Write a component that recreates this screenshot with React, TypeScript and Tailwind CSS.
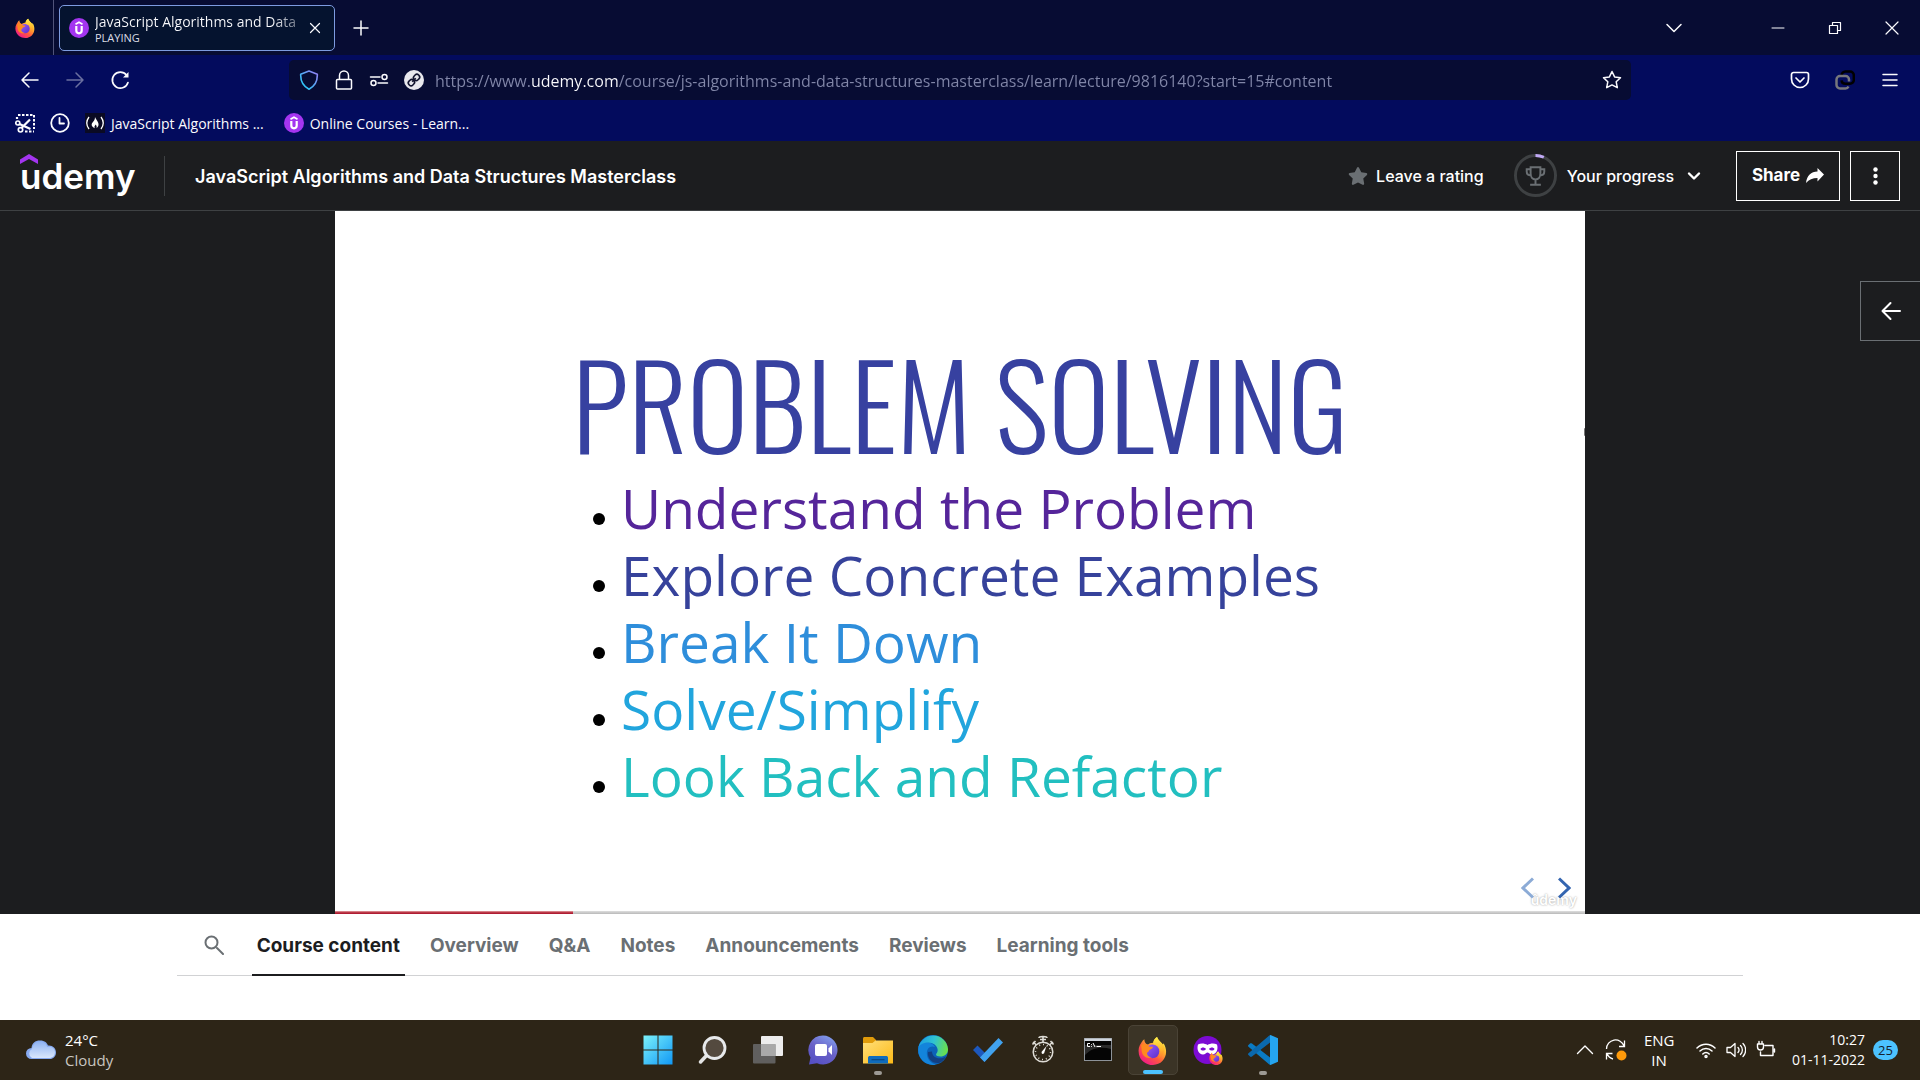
import React from "react";
import { FaStar } from "react-icons/fa";

const seg = "font-['Segoe_UI','Open_Sans','Noto_Sans',sans-serif]";

function FirefoxLogo({ className = "size-5", id }: { className?: string; id: string }) {
  return (
    <svg viewBox="0 0 32 32" className={className} aria-hidden="true">
      <defs>
        <linearGradient id={`${id}-a`} x1="0.85" y1="0.1" x2="0.2" y2="0.95">
          <stop offset="0" stopColor="#fff44f" />
          <stop offset="0.3" stopColor="#ffb02e" />
          <stop offset="0.6" stopColor="#ff5a3c" />
          <stop offset="1" stopColor="#f0188c" />
        </linearGradient>
        <linearGradient id={`${id}-b`} x1="0" y1="0" x2="1" y2="1">
          <stop offset="0" stopColor="#9a5cff" />
          <stop offset="1" stopColor="#5b2fc9" />
        </linearGradient>
        <linearGradient id={`${id}-c`} x1="0" y1="0" x2="0" y2="1">
          <stop offset="0" stopColor="#fff04a" />
          <stop offset="0.6" stopColor="#ffb62b" />
          <stop offset="1" stopColor="#ff7a30" />
        </linearGradient>
      </defs>
      <path fill={`url(#${id}-a)`} d="M4 7c-3 4-4 8-3 13 1.400 7 8 12 15.500 12C25 32 31 25.500 31 17.500c0-3.500-1-7-3-9.500l-.6 2.200C26 7 22 5 21 1c-2.500 1.500-4 4-4.200 6.500C14 7.500 12 8.500 11 9.500 8.500 9 7 6.500 7 3.500 5.500 4.500 4.500 6 4 7z" />
      <circle cx="16" cy="17" r="7.500" fill={`url(#${id}-b)`} />
      <path fill="#ff8a1f" d="M3.500 10c3-2 6.500-1 8.500 1.500 1.500.3 3 .2 4.500.3-.2 1.700-1.500 2.300-3 3-2 1-1.500 3.200-3.500 3.500-.5 3 2.500 5.500 5.500 5.200-5 2.500-11.500-1-11.500-8z" />
      <path fill={`url(#${id}-c)`} d="M21 1c-3.500 2-4.800 6-3.600 8.500 5 .8 7.800 4 7.600 8.500-.1 3-1.500 5-3 6.500 4-1 7.500-5.500 7.200-11.500-.4-5-6.400-7-8.200-12z" />
    </svg>
  );
}

function UdemyBadge() {
  return (
    <svg viewBox="0 0 20 20" className="size-5 shrink-0" aria-hidden="true">
      <circle cx="10" cy="10" r="10" fill="#a435f0" />
      <path d="M6.500 6.200 10 4.200l3.500 2" fill="none" stroke="#fff" strokeWidth="1.700" />
      <path d="M7.300 8v4.600a2.700 2.700 0 0 0 5.400 0V8" fill="none" stroke="#fff" strokeWidth="2.200" />
    </svg>
  );
}

function Line({ d, className = "size-5", w = 1.5, box = 20, children }: { d: string; className?: string; w?: number; box?: number; children?: React.ReactNode }) {
  return (
    <svg viewBox={`0 0 ${box} ${box}`} className={`shrink-0 ${className}`} fill="none" stroke="currentColor" strokeWidth={w} strokeLinecap="round" strokeLinejoin="round" aria-hidden="true">
      <path d={d} />
      {children}
    </svg>
  );
}

function IconButton({ label, className = "", children }: { label: string; className?: string; children: React.ReactNode }) {
  return (
    <button type="button" aria-label={label} className={`flex shrink-0 items-center justify-center ${className}`}>
      {children}
    </button>
  );
}

function TabStrip() {
  return (
    <div className="flex h-[55px] items-center bg-[#070c33] text-[#fbfbfe]">
      <div className="flex h-full w-[54px] items-center border-r border-[#51547a] pl-[15px]">
        <FirefoxLogo id="fx-tab" />
      </div>
      <div className="ml-[5px] flex h-[46px] w-[276px] items-center rounded-[5px] border border-[#7d9be0] bg-[#05132f] pl-[9px]">
        <UdemyBadge />
        <div className="ml-1.5 w-[208px] whitespace-nowrap">
          <div className="bg-linear-to-r from-[#fbfbfe] from-85% to-[#fbfbfe]/30 bg-clip-text text-[14px] leading-5 text-transparent">JavaScript Algorithms and Data</div>
          <div className="text-[11px] leading-3 text-[#dcdde6]">PLAYING</div>
        </div>
        <IconButton label="Close tab" className="ml-0.5 size-5">
          <Line d="M5.500 5.500l9 9M14.500 5.500l-9 9" w={1.2} />
        </IconButton>
      </div>
      <IconButton label="New tab" className="ml-[16px] size-5">
        <Line d="M10 3v14M3 10h14" />
      </IconButton>
      <div className="ml-auto flex items-center">
        <IconButton label="List all tabs" className="mr-[50px] h-10 w-[50px]">
          <Line d="M3 6.500l7 7 7-7" />
        </IconButton>
        <IconButton label="Minimize" className="h-10 w-[57px]">
          <Line d="M4 10h12" w={1} className="size-5" />
        </IconButton>
        <IconButton label="Restore" className="h-10 w-[57px]">
          <Line d="M4.500 7.500h8v8h-8zM7.500 7.500v-3h8v8h-3" w={1.2} />
        </IconButton>
        <IconButton label="Close" className="h-10 w-[57px]">
          <Line d="M4 4l12 12M16 4L4 16" w={1.2} />
        </IconButton>
      </div>
    </div>
  );
}

function NavBar() {
  return (
    <div className="flex h-[50px] items-center bg-[#030b5d] pr-[15px] text-[#fbfbfe]">
      <div className="flex w-[289px] shrink-0 items-center gap-[15px] pl-[15px]">
        <IconButton label="Back" className="size-[30px]">
          <Line d="M18 10H2M9 3l-7 7 7 7" className="size-5" />
        </IconButton>
        <IconButton label="Forward" className="size-[30px] text-[#6b70a0]">
          <Line d="M2 10h16M11 3l7 7-7 7" />
        </IconButton>
        <IconButton label="Reload" className="size-[30px]">
          <Line d="M18 12.500a8 8 0 1 1-1.500-7.500" w={1.7}>
            <path d="M18.500 2v5.500H13z" fill="currentColor" stroke="none" />
          </Line>
        </IconButton>
      </div>
      <div className="flex h-10 min-w-0 grow items-center gap-[15px] rounded-[5px] bg-[#070c33] pr-[9px] pl-2.5">
        <svg viewBox="0 0 20 20" className="size-5 shrink-0" fill="none" aria-hidden="true">
          <linearGradient id="shield" x1="0" y1="1" x2="1" y2="0">
            <stop offset="0.2" stopColor="#2fc4f7" />
            <stop offset="0.9" stopColor="#8d84f5" />
          </linearGradient>
          <path d="M10 1l8.300 3.200c.3 6.300-2 11.800-8.300 15-6.300-3.200-8.600-8.700-8.300-15z" stroke="url(#shield)" strokeWidth="1.600" strokeLinejoin="round" />
        </svg>
        <Line d="M3.500 9.500h13a1 1 0 0 1 1 1V18a1 1 0 0 1-1 1h-13a1 1 0 0 1-1-1v-7.500a1 1 0 0 1 1-1zM5.500 9V5.500a4.500 4.500 0 0 1 9 0V9" />
        <Line d="M1.500 7H11M9 13h9.500">
          <circle cx="15.500" cy="7" r="2.500" />
          <circle cx="4.500" cy="13" r="2.500" />
        </Line>
        <svg viewBox="0 0 20 20" className="size-5 shrink-0" fill="none" aria-hidden="true">
          <circle cx="10" cy="10" r="10" fill="#e8e8ee" />
          <g stroke="#12142f" strokeWidth="1.600" transform="rotate(-45 10 10)">
            <rect x="3.200" y="7.300" width="6.300" height="5.400" rx="2.500" />
            <rect x="10.500" y="7.300" width="6.300" height="5.400" rx="2.500" />
            <path d="M7.500 10h5" />
          </g>
        </svg>
        <input
          aria-label="Address"
          className="-ml-1 h-10 min-w-0 grow bg-[linear-gradient(90deg,#8186a8_95px,#fbfbfe_95px,#fbfbfe_184px,#8186a8_184px)] bg-clip-text pt-0.5 text-[16px] text-transparent outline-none"
          defaultValue="https://www.udemy.com/course/js-algorithms-and-data-structures-masterclass/learn/lecture/9816140?start=15#content"
        />
        <IconButton label="Bookmark this page">
          <Line d="M10 1.500l2.600 5.400 5.900.8-4.300 4.100 1.100 5.900L10 14.900l-5.300 2.800 1.100-5.900L1.500 7.700l5.900-.8z" />
        </IconButton>
      </div>
      <div className="flex w-[274px] shrink-0 items-center justify-end gap-[15px]">
        <IconButton label="Save to Pocket" className="size-[30px]">
          <Line d="M3.500 2.500h13a2 2 0 0 1 2 2V9a8.500 8.500 0 0 1-17 0V4.500a2 2 0 0 1 2-2zM6 8l4 4 4-4" w={1.7} />
        </IconButton>
        <IconButton label="Extension" className="size-[30px]">
          <svg viewBox="0 0 20 20" className="size-5" fill="none" strokeWidth="2.500" aria-hidden="true">
            <path d="M6.500 5.500a4 4 0 0 1 4-4H15a3.800 3.800 0 0 1 3.800 3.800V10A3.800 3.800 0 0 1 15 13.800h-4.500a4 4 0 0 1-4-3.500" stroke="#000" />
            <path d="M14 11.500V9.500a3.500 3.500 0 0 0-3.500-3.500H5a3.500 3.500 0 0 0-3.500 3.500V15A3.500 3.500 0 0 0 5 18.500h5a3.500 3.500 0 0 0 3.500-2" stroke="#77777c" />
          </svg>
        </IconButton>
        <IconButton label="Open menu" className="size-[30px]">
          <Line d="M3 4.500h14M3 10h14M3 15.500h14" />
        </IconButton>
      </div>
    </div>
  );
}

function Bookmarks() {
  return (
    <div className="flex h-[36px] items-center bg-[#030b5d] pl-[15px] text-[14px] text-[#fbfbfe]">
      <IconButton label="Take screenshot">
        <svg viewBox="0 0 20 20" className="size-5" fill="none" stroke="currentColor" strokeWidth="1.700" aria-hidden="true">
          <path d="M3 2h16M19 2v14M10 18.500h9" strokeDasharray="2.500 1.500" strokeWidth="2" />
          <circle cx="2.800" cy="10" r="2" />
          <circle cx="5.500" cy="16.800" r="2.200" />
          <path d="M4.500 11l11 5M6.500 15L15 6.500M2 4v2" strokeWidth="2.200" />
        </svg>
      </IconButton>
      <IconButton label="History" className="ml-[15px]">
        <Line d="M9.500 5v5.500H14" w={1.8}>
          <circle cx="10" cy="10" r="8.800" />
        </Line>
      </IconButton>
      <a href="#freecodecamp" className="ml-[15px] flex items-center gap-1.5">
        <svg viewBox="0 0 20 20" className="size-5" fill="none" stroke="#fff" strokeWidth="1.300" aria-hidden="true">
          <rect width="20" height="20" fill="#0a0a23" stroke="none" />
          <path d="M4 4c-3 4-3 8 0 12M16 4c3 4 3 8 0 12" />
          <path d="M10 4c1 3 4 5 3.500 8-.2 1.300-1 2.300-2 3 .5-1.500 0-2.500-1-3.500-.3 1-.9 1.300-1 2.200-.1.600.1 1 .3 1.500C6 13.500 6 11 8 9c1-1.300 2-2.500 2-5z" fill="#fff" stroke="none" />
        </svg>
        JavaScript Algorithms ...
      </a>
      <a href="#online-courses" className="ml-5 flex items-center gap-1.5">
        <UdemyBadge />
        Online Courses - Learn...
      </a>
    </div>
  );
}

function CourseHeader() {
  return (
    <header className="flex h-[70px] items-center border-b border-[#3e4143] bg-[#1c1d1f] pr-5 pl-5 font-['Inter',sans-serif] text-white">
      <a href="#home" aria-label="udemy" className="relative flex w-[145px] items-center border-r border-[#3e4143]">
        <svg viewBox="0 0 18 10" className="absolute top-0 left-0 h-2.5 w-[18px] -translate-y-0.5" aria-hidden="true">
          <path d="M0 5.500 9 0l9 5.500V10L9 5 0 10z" fill="#a435f0" />
        </svg>
        <span className="text-[35px] leading-10 font-semibold">udemy</span>
      </a>
      <h1 className="ml-[30px] pt-0.5 text-[18px] font-semibold">JavaScript Algorithms and Data Structures Masterclass</h1>
      <div className="ml-auto flex items-center text-[16px] font-medium">
        <button type="button" className="flex items-center gap-2">
          <FaStar className="size-5 text-[#6a6f73]" />
          Leave a rating
        </button>
        <button type="button" className="ml-[30px] flex items-center gap-2.5">
          <svg viewBox="0 0 44 44" className="size-[43px]" fill="none" aria-hidden="true">
            <circle cx="22" cy="22" r="20.500" stroke="#3e4143" strokeWidth="3" />
            <path d="M22 1.500a20.500 20.500 0 0 1 8.500 1.800" stroke="#c0a9f5" strokeWidth="3" />
            <path d="M17 13.500h10v6.500c0 3.500-2 6-5 6s-5-2.500-5-6zM17 15.500h-4v2.500c0 2.500 2 4 4.500 4M27 15.500h4v2.500c0 2.500-2 4-4.500 4M22 26v5M16.500 31.500h11" stroke="#6a6f73" strokeWidth="2" />
          </svg>
          Your progress
          <Line d="M5 7.500l5 5 5-5" w={2.4} className="size-5" />
        </button>
        <button type="button" className="ml-8 flex h-[50px] w-[104px] items-center justify-center gap-1.5 border border-white text-[17px] font-bold">
          Share
          <svg viewBox="0 0 18 15" className="h-[15px] w-[18px]" aria-hidden="true">
            <path d="M18 6.500 11.500 0v3.500C5 3.700 1 7.500 0 15c3-3.500 6.500-5 11.500-5v3.500z" fill="currentColor" />
          </svg>
        </button>
        <IconButton label="More options" className="ml-2.5 size-[50px] border border-white">
          <svg viewBox="0 0 20 20" className="size-5" fill="currentColor" aria-hidden="true">
            <circle cx="10.500" cy="3.500" r="2.200" />
            <circle cx="10.500" cy="10" r="2.200" />
            <circle cx="10.500" cy="16.500" r="2.200" />
          </svg>
        </IconButton>
      </div>
    </header>
  );
}

const steps = [
  { text: "Understand the Problem", color: "text-[#55259a]" },
  { text: "Explore Concrete Examples", color: "text-[#36429b]" },
  { text: "Break It Down", color: "text-[#2e8edb]" },
  { text: "Solve/Simplify", color: "text-[#21a5dd]" },
  { text: "Look Back and Refactor", color: "text-[#22bfc0]" },
];

function Player() {
  return (
    <section aria-label="Lecture video" className="relative flex justify-center bg-[#1c1d1f]">
      <div className="relative aspect-video w-[65.1%] overflow-hidden bg-white">
        <h2 className="mt-[119px] text-center font-['Oswald',sans-serif] text-[116px] leading-[144px] font-[350] whitespace-nowrap text-[#3741a0]">PROBLEM SOLVING</h2>
        <ul className="ml-[258px] font-['Open_Sans',sans-serif] text-[55px] leading-[67px] whitespace-nowrap">
          {steps.map((s) => (
            <li key={s.text} className={`flex items-center ${s.color}`}>
              <span className="mt-[22px] mr-4 size-3 shrink-0 rounded-full bg-black" />
              {s.text}
            </li>
          ))}
        </ul>
        <span className="absolute right-2 bottom-1 font-['Inter',sans-serif] text-[14px] leading-5 font-semibold text-white [text-shadow:0_0_2px_#999]">ûdemy</span>
        <div className="absolute right-3.5 bottom-[15px] flex gap-6">
          <button type="button" aria-label="Previous slide">
            <svg viewBox="0 0 13 22" className="h-[22px] w-[13px]" fill="none" stroke="#8cabd6" strokeWidth="3" aria-hidden="true"><path d="M12 1.500 2 11l10 9.500" /></svg>
          </button>
          <button type="button" aria-label="Next slide">
            <svg viewBox="0 0 13 22" className="h-[22px] w-[13px]" fill="none" stroke="#3465b0" strokeWidth="3" aria-hidden="true"><path d="M1 1.500 11 11 1 20.500" /></svg>
          </button>
        </div>
        <span className="absolute top-[217px] -right-px h-2 w-0.5 rounded-full bg-[#777]" />
        <div className="absolute inset-x-0 bottom-0 h-[3px] bg-linear-to-b from-[#dedede] to-[#b9b9b9]">
          <div className="h-full w-[19%] bg-linear-to-b from-[#e4a0aa] to-[#b01c34] to-60%" />
        </div>
      </div>
      <IconButton label="Open course sidebar" className="absolute top-[70px] right-0 size-[60px] border border-r-0 border-[#6a6f73] text-white">
        <Line d="M19 10H2M9.500 2l-8 8 8 8" w={2} />
      </IconButton>
    </section>
  );
}

const tabs = ["Course content", "Overview", "Q&A", "Notes", "Announcements", "Reviews", "Learning tools"];

function CourseTabs() {
  return (
    <div className="grow bg-white">
      <nav className="mx-[9.2%] flex h-[62px] items-stretch gap-5 border-b border-[#d1d2d4] pl-[27px] font-['Inter',sans-serif] text-[19px] font-bold text-[#6a6f73]">
        <IconButton label="Search" className="mr-2">
          <Line d="M13 13l6 6" w={2}>
            <circle cx="7.500" cy="7.500" r="6" />
          </Line>
        </IconButton>
        {tabs.map((t, i) => (
          <button key={t} type="button" className={`-mb-px border-b-2 px-[5px] pt-1 ${i === 0 ? "border-[#1c1d1f] text-[#1c1d1f]" : "border-transparent"}`}>
            {t}
          </button>
        ))}
      </nav>
    </div>
  );
}

function StartIcon() {
  return (
    <svg viewBox="0 0 30 30" className="size-[30px]" aria-hidden="true">
      <linearGradient id="win" x1="0" y1="0" x2="30" y2="30" gradientUnits="userSpaceOnUse">
        <stop offset="0" stopColor="#7df3fb" />
        <stop offset="1" stopColor="#0f96f5" />
      </linearGradient>
      <path fill="url(#win)" d="M.5.5h14v14H.5zM15.500.5h14v14h-14zM.5 15.500h14v14H.5zM15.500 15.500h14v14h-14z" />
    </svg>
  );
}

const apps: { name: string; icon: React.ReactNode; state?: "open" | "active" }[] = [
  { name: "Start", icon: <StartIcon /> },
  {
    name: "Search",
    icon: (
      <svg viewBox="0 0 30 30" className="size-[30px]" fill="none" aria-hidden="true">
        <path d="M9 20 2.500 27" stroke="#e4e4e4" strokeWidth="3.500" strokeLinecap="round" />
        <circle cx="16.500" cy="13" r="10.500" fill="#544a3f" stroke="#e8eaec" strokeWidth="2.800" />
      </svg>
    ),
  },
  {
    name: "Task View",
    icon: (
      <svg viewBox="0 0 30 30" className="size-[30px]" aria-hidden="true">
        <rect x="8" y="1" width="22" height="20" rx="1" fill="#ededed" />
        <rect x="0" y="9" width="22.500" height="19.500" rx="1" fill="#666" opacity=".9" />
        <rect x="8" y="9" width="14.500" height="12" fill="#a9a9a9" />
      </svg>
    ),
  },
  {
    name: "Chat",
    icon: (
      <svg viewBox="0 0 30 30" className="size-[30px]" aria-hidden="true">
        <linearGradient id="chat" x1="0.800" y1="0" x2="0.300" y2="1">
          <stop offset="0" stopColor="#82a0ee" />
          <stop offset="0.500" stopColor="#6a62c8" />
          <stop offset="1" stopColor="#5650c4" />
        </linearGradient>
        <path fill="url(#chat)" d="M15 .5A14.500 14.500 0 1 1 9 28.200L1 29.500l1.500-7A14.500 14.500 0 0 1 15 .5z" />
        <rect x="7" y="9" width="12" height="12" rx="2" fill="#fff" />
        <path d="M20.500 13.500 24 10v10l-3.500-3.500z" fill="#fff" />
      </svg>
    ),
  },
  {
    name: "File Explorer",
    state: "open",
    icon: (
      <svg viewBox="0 0 30 30" className="size-[30px]" aria-hidden="true">
        <linearGradient id="folder" x1="0" y1="0" x2="1" y2="1">
          <stop offset="0" stopColor="#ffdf7a" />
          <stop offset="1" stopColor="#fcba17" />
        </linearGradient>
        <path fill="#e09b0a" d="M0 3.500C0 2.600.6 2 1.500 2H10l3 3v5H0z" />
        <path fill="url(#folder)" d="M0 8h9.500l3-2.500H30v23H0z" />
        <path fill="#0f6cbd" d="M5 28.500V23c0-1.400.8-2 2-2h16c1.200 0 2 .6 2 2v5.500z" />
        <path fill="#0a4a86" d="M8.500 24h13v1.300h-13z" />
      </svg>
    ),
  },
  {
    name: "Microsoft Edge",
    icon: (
      <svg viewBox="0 0 30 30" className="size-[30px]" aria-hidden="true">
        <linearGradient id="edge-a" x1="0" y1="0.300" x2="1" y2="0.500">
          <stop offset="0" stopColor="#1b9de2" />
          <stop offset="0.500" stopColor="#30c3d2" />
          <stop offset="1" stopColor="#6be04a" />
        </linearGradient>
        <circle cx="15" cy="15" r="15" fill="#0c62b8" />
        <path fill="#123f82" d="M10 17c-1 6 4 12 11 11 3-1 6-4 7-6.500-7 4-14 1-14-5z" />
        <path fill="#1384db" d="M.3 13C1 8 5 6.500 9 7c4 .5 7 2.500 8 5-5-2-9 2-8 8 .7 4.500 4 8.500 9 9.700A15 15 0 0 1 .3 13z" />
        <path fill="url(#edge-a)" d="M.3 13A15 15 0 0 1 30 14c.2 5-3.500 7.500-7.500 7.500-3 0-4.500-1-4.500-2s1.700-1.700 1.700-4.500C19.500 10.500 15 7.500 10 7.500S1 10 .3 13z" />
      </svg>
    ),
  },
  {
    name: "To Do",
    icon: (
      <svg viewBox="0 0 30 30" className="size-[30px]" aria-hidden="true">
        <path fill="#1d58bd" d="m0 15 4.500-4.500L16 22l-4.500 5z" />
        <path fill="#41a2ee" d="M7 22.500 25.500 3 30 7.500 11.500 27z" />
      </svg>
    ),
  },
  {
    name: "Stopwatch",
    icon: (
      <svg viewBox="0 0 30 30" className="size-[30px]" fill="none" stroke="#dedcd6" aria-hidden="true">
        <circle cx="15" cy="17" r="9.800" strokeWidth="1.500" />
        <circle cx="15" cy="17" r="7.500" strokeWidth="1.500" strokeDasharray="1 2.900" />
        <path d="M11 3c0-2 8-2 8 0M15 2v5M12 4.500h6M5 7l3.500 3M7.500 6l-3 3.500M22.500 6l3 3.500M25 7l-3.500 3" strokeWidth="1.600" />
        <path d="m18.500 11-2.500 7.500-2 .5-.5-2z" fill="#fff" stroke="none" />
      </svg>
    ),
  },
  {
    name: "Command Prompt",
    icon: (
      <svg viewBox="0 0 30 30" className="size-[30px]" aria-hidden="true">
        <rect x="1.500" y="3.500" width="27" height="22" fill="#050505" stroke="#8d9298" />
        <path d="M2 10h26v4C18 11 8 13 2 20z" fill="#2b2b2b" />
        <path fill="#cfd5dd" d="M1.500 3.500h27V6h-27z" />
        <path d="M7 8.500H4.500v3H7M8.500 9v.8M8.500 11v.8M10 8l2 4M13.500 11.500H18" stroke="#fff" fill="none" />
      </svg>
    ),
  },
  { name: "Firefox", state: "active", icon: <FirefoxLogo id="fx-task" className="size-[29px]" /> },
  {
    name: "Firefox Private Browsing",
    icon: (
      <span className="relative block size-[30px]">
        <svg viewBox="0 0 30 30" className="size-[30px]" aria-hidden="true">
          <circle cx="14.500" cy="15" r="14" fill="#7c0bd3" />
          <path fill="#fff" fillRule="evenodd" d="M5 9.500c3-1.500 7-1 9.500.5 2.500-1.500 6.500-2 9.500-.5 1.500 4.500-.5 10-5 10-2 0-3.500-2-4.500-2s-2.500 2-4.500 2c-4.500 0-6.500-5.500-5-10zM7.500 14c1 2 4 2 5.500 0-1.500-2-4.500-2-5.500 0zm8.500 0c1.500 2 4.500 2 5.500 0-1-2-4-2-5.500 0z" />
        </svg>
        <span className="absolute right-0 bottom-0"><FirefoxLogo id="fx-private" className="size-[14px]" /></span>
      </span>
    ),
  },
  {
    name: "Visual Studio Code",
    state: "open",
    icon: (
      <svg viewBox="0 0 30 30" className="size-[30px]" aria-hidden="true">
        <path fill="#0a7bc4" d="M0 10.500 2 8.500c.6-.5 1.300-.5 2 0L24 24l-1.500 6c-.5 0-1-.4-1.500-.8L.5 11.800C0 11.400 0 11 0 10.500z" />
        <path fill="#0b69ae" d="M0 19.500 2 21.500c.6.5 1.300.5 2 0L24 6 22.500 0c-.5 0-1 .4-1.500.8L.5 18.200c-.5.400-.5.800-.5 1.300z" />
        <path fill="#25a5f0" d="M22.500 0 30 3.300v23.400L22.500 30c-.6 0-.5-.5-.5-1V1c0-.5-.1-1 .5-1z" />
      </svg>
    ),
  },
];

function Taskbar() {
  return (
    <footer className="grid h-[60px] grid-cols-[1fr_auto_1fr] items-center bg-[#2d2517] text-[15px] leading-5 text-white">
      <button type="button" className="flex items-center gap-[9px] justify-self-start pl-[26px] text-left">
        <svg viewBox="0 0 30 20" className="h-5 w-[30px]" aria-hidden="true">
          <linearGradient id="cloud" x1="0" y1="0" x2="0" y2="1">
            <stop offset="0" stopColor="#8fb3f2" />
            <stop offset="1" stopColor="#d9e7fc" />
          </linearGradient>
          <path fill="#87aaf0" d="M5.500 19a5.500 5.500 0 0 1 0-11C6 3 9 .5 14 .5S21 3 22 5.500c4.500-.5 8 2.500 8 7 0 4-3 6.500-6 6.500z" />
          <path fill="url(#cloud)" d="M6 18a5 5 0 0 1 0-9c1-5 4-7.500 8-7.500s6.500 2.500 7.200 5.500c4-1 7.800 1.500 7.800 5 0 3.500-2 5.500-5 6z" />
        </svg>
        <span>
          <span className="block">24°C</span>
          <span className="block text-[#c9c6c0]">Cloudy</span>
        </span>
      </button>
      <div className="flex gap-[5px]">
        {apps.map((a) => (
          <button
            key={a.name}
            type="button"
            aria-label={a.name}
            className={`relative flex size-[50px] items-center justify-center rounded-[5px] ${a.state === "active" ? "border border-[#4a4336] bg-[#3b3426]" : ""}`}
          >
            {a.icon}
            {a.state === "open" && <span className="absolute bottom-0 h-1 w-2 rounded-full bg-[#9d9a94]" />}
            {a.state === "active" && <span className="absolute bottom-0 h-1 w-5 rounded-full bg-[#4cc2ff]" />}
          </button>
        ))}
      </div>
      <div className="flex items-center justify-self-end pr-[22px]">
        <IconButton label="Show hidden icons">
          <Line d="M2.500 13.500 10 6l7.500 7.500" w={1.4} />
        </IconButton>
        <svg viewBox="0 0 22 22" className="ml-[10px] size-[22px]" fill="none" stroke="#fff" strokeWidth="1.300" role="img" aria-label="Updates available">
          <path d="M1.500 10a9 9 0 0 1 17.500-3M19.500 1.500V7.500H14M8 20a9 9 0 0 1-6-5.500M1.500 20.500v-6h6" />
          <circle cx="16.500" cy="16.500" r="5" fill="#ff9a0a" stroke="none" />
        </svg>
        <button type="button" className="ml-[17px] w-[30px] text-center">ENG<br />IN</button>
        <div className="ml-[22px] flex items-center gap-2.5">
          <Line d="M1 8c5-5 13-5 18 0M4 11c3.500-3.500 8.500-3.500 12 0M6.800 14c2-2 4.400-2 6.400 0">
            <circle cx="10" cy="16.500" r="1" />
          </Line>
          <Line d="M1 7.500h3.500L9 3.500v13l-4.500-4H1zM12 7.500c1.300 1.500 1.300 3.500 0 5M14.500 5.500c2.500 2.500 2.500 6.500 0 9M17 3.500c3.500 3.500 3.500 9.500 0 13" w={1.3} />
          <Line d="M9 5.500h8v10H4.500V12M18.500 9v3M1.500 4h6v3a3 3 0 0 1-6 0zM3 4V1.500M6 4V1.500" w={1.4} />
        </div>
        <button type="button" className="ml-4 flex items-center gap-2 text-right">
          <span className="text-[14px] leading-5">10:27<br />01-11-2022</span>
          <span className="flex h-5 w-[25px] items-center justify-center rounded-full bg-[#4cc2ff] text-[13px] text-[#16202b]">25</span>
        </button>
      </div>
    </footer>
  );
}

export default function App() {
  return (
    <div className={`flex min-h-screen flex-col bg-white ${seg}`}>
      <TabStrip />
      <NavBar />
      <Bookmarks />
      <CourseHeader />
      <Player />
      <CourseTabs />
      <Taskbar />
    </div>
  );
}
